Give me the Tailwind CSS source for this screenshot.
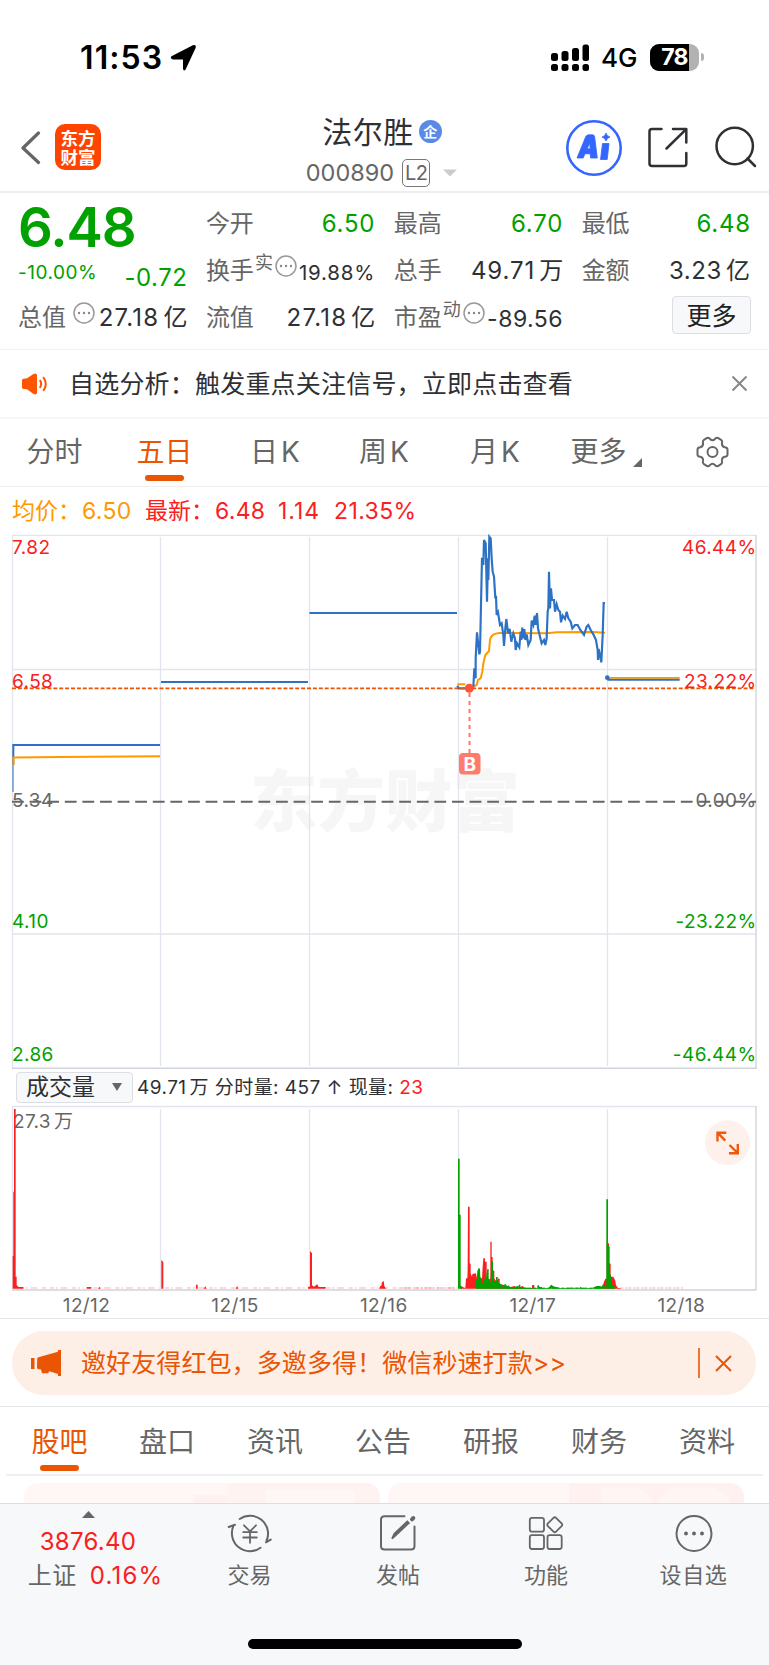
<!DOCTYPE html>
<html lang="zh-CN">
<head>
<meta charset="utf-8">
<title>法尔胜 000890</title>
<script src="https://cdn.jsdelivr.net/npm/@tailwindcss/browser@4"></script>
</head>
<body class="bg-white font-['Inter','Noto_Sans_CJK_SC',sans-serif] text-[#2f3033]">
<div class="flex h-[1665px] w-[769px] flex-col overflow-hidden bg-white">

  <!-- status bar -->
  <div class="flex h-[100px] shrink-0 items-start pt-[38px]">
    <div class="flex h-[40px] items-center pl-[80px]">
      <span class="w-[90px] text-[32px] font-semibold leading-none tracking-[1.1px] text-black">11:53</span>
      <svg width="28" height="28" viewBox="0 0 28 28"><path d="M1.500 12.200 22.800 1.300Q26.600 0 25.600 4L15.600 25.400Q13.800 27.600 13 25V15.500H3Q-.4 14.500 1.500 12.200Z" fill="#000"/></svg>
    </div>
    <div class="ml-auto flex h-[38px] items-center pr-[65px]">
      <svg class="mr-[11px]" width="40" height="28" viewBox="0 0 40 28" fill="#000"><rect x="1" y="10" width="7" height="8" rx="2.500"/><rect x="11.500" y="8" width="7" height="10" rx="2.500"/><rect x="22" y="5" width="7" height="13" rx="2.500"/><rect x="32.500" y="1.500" width="6.500" height="16.500" rx="2.500"/><rect x="1" y="21" width="7" height="7" rx="2.500"/><rect x="11.500" y="21" width="7" height="7" rx="2.500"/><rect x="22" y="21" width="7" height="7" rx="2.500"/><rect x="32.500" y="21" width="6.500" height="7" rx="2.500"/></svg>
      <span class="w-[49px] pt-[2px] text-[26px] font-medium leading-none text-black">4G</span>
      <div class="flex h-[27px] w-[49px] items-center overflow-hidden rounded-[9px] bg-[#b2b2b2]">
        <span class="flex h-full w-[39px] items-center justify-end bg-black pr-[1px] text-[23px] font-bold leading-none tracking-tight text-white">78</span>
      </div>
      <div class="ml-[2px] h-[8px] w-[3px] rounded-r-full bg-[#b2b2b2]"></div>
    </div>
  </div>

  <!-- title bar -->
  <div class="flex h-[93px] shrink-0 border-b-2 border-[#eeeeee]">
    <div class="flex w-[300px] items-start pl-[19px] pt-[24px]">
      <svg class="mt-[7px]" width="23" height="34" viewBox="0 0 23 34" fill="none" stroke="#666" stroke-width="3.200" stroke-linecap="round" stroke-linejoin="round"><path d="M19.500 2 4 17 19.500 31.500"/></svg>
      <div class="ml-[13px] flex h-[46px] w-[46px] flex-col items-center justify-center rounded-[10px] bg-[#ff4400] pt-[1px] text-[17.500px] font-bold leading-[19px] text-white"><span>东方</span><span>财富</span></div>
    </div>
    <div class="flex w-[165px] flex-col items-center pt-[13px]">
      <div class="flex h-[37px] items-center gap-[5px] pr-[1px]">
        <span class="text-[30px] leading-none tracking-[.5px]">法尔胜</span>
        <span class="flex size-[23px] items-center justify-center rounded-full bg-[#5b8ae6] text-[14px] font-bold leading-none text-white">企</span>
      </div>
      <div class="mt-[9px] flex h-[28px] items-center pr-[2px] text-[#666]">
        <span class="text-[23.500px] leading-none">000890</span>
        <span class="ml-[8px] flex h-[28px] w-[28px] items-center justify-center rounded-[5px] border border-[#777] text-[20px] leading-none tracking-tight">L2</span>
        <svg class="ml-[13px]" width="14" height="8" viewBox="0 0 14 8"><path d="M0 .5H14L7 7.500Z" fill="#ccc"/></svg>
      </div>
    </div>
    <div class="flex flex-1 pl-[101px] pt-[20px]">
      <svg width="56" height="56" viewBox="0 0 56 56"><circle cx="28" cy="28" r="26.700" fill="none" stroke="#3366ff" stroke-width="2.600"/><g fill="#3366ff" stroke="#3366ff" stroke-width=".8" stroke-linejoin="round"><path fill-rule="evenodd" d="M11 38 19.800 16.500Q20.800 14.800 22.500 14.800H26.500Q28.300 14.800 28.600 16.600L31.300 38H24.600L24.200 33.800H19L17.200 38ZM21.200 28.800H24.200L23.700 23Z"/><path d="M36.500 23.500H43L41.200 39.500H34.500ZM40 13Q40.800 16.300 44 17Q40.800 17.800 40 21Q39.200 17.800 36 17Q39.200 16.300 40 13Z"/></g></svg>
      <svg class="ml-[25px] mt-[7px]" width="41" height="42" viewBox="0 0 41 42" fill="none" stroke="#2f3033" stroke-width="2.500" stroke-linecap="round" stroke-linejoin="round"><path d="M14.500 2H5Q2.500 2 2.500 4.500V36.500Q2.500 39 5 39H37Q39.300 39 39.300 36.500V26M26 2H39.300V15.500M39 2.300 19.500 21.500"/></svg>
      <svg class="ml-[27px] mt-[6px]" width="42" height="42" viewBox="0 0 42 42" fill="none" stroke="#2f3033" stroke-width="2.500" stroke-linecap="round"><circle cx="19.700" cy="20" r="18.200"/><path d="M32.500 32.500 40 40"/></svg>
    </div>
  </div>

  <!-- quote summary -->
  <div class="grid h-[157px] shrink-0 grid-cols-4 gap-x-[18.500px] border-b border-[#f2f2f2] px-[18px] pt-[7px] text-[24px] leading-[47px] text-[#2f3033]">
    <div class="flex flex-col">
      <div class="h-[55px] text-[54.500px] font-semibold leading-[55px] tracking-[-1px] text-[#00a100]">6.48</div>
      <div class="flex h-[39px] items-start justify-between text-[#00a100]"><span class="text-[19px] leading-[36px] tracking-[.5px]">-10.00%</span><span class="leading-[45px] tracking-[.5px]">-0.72</span></div>
      <div class="flex items-center justify-between whitespace-nowrap"><span class="flex items-center text-[#666]">总值<svg class="mb-[9px] ml-[7px]" width="22" height="22" viewBox="0 0 22 22"><circle cx="11" cy="11" r="10" fill="none" stroke="#999" stroke-width="1.500"/><g fill="#888"><circle cx="6" cy="11" r="1.200"/><circle cx="11" cy="11" r="1.200"/><circle cx="16" cy="11" r="1.200"/></g></svg></span><span><span class="tracking-[1.200px]">27.18</span><span class="ml-[4px]">亿</span></span></div>
    </div>
    <div class="flex flex-col whitespace-nowrap">
      <div class="flex h-[47px] justify-between"><span class="text-[#666]">今开</span><span class="tracking-[.8px] text-[#00a100]">6.50</span></div>
      <div class="flex h-[47px] items-center justify-between"><span class="flex items-center text-[#666]">换手<span class="mb-[16px] ml-[1px] text-[18px] leading-none">实</span><svg class="mb-[10px] ml-[2px]" width="22" height="22" viewBox="0 0 22 22"><circle cx="11" cy="11" r="10" fill="none" stroke="#999" stroke-width="1.500"/><g fill="#888"><circle cx="6" cy="11" r="1.200"/><circle cx="11" cy="11" r="1.200"/><circle cx="16" cy="11" r="1.200"/></g></svg></span><span class="pt-[4px] text-[20.500px] tracking-[.8px]">19.88%</span></div>
      <div class="flex h-[47px] justify-between"><span class="text-[#666]">流值</span><span><span class="tracking-[1.200px]">27.18</span><span class="ml-[4px]">亿</span></span></div>
    </div>
    <div class="flex flex-col whitespace-nowrap">
      <div class="flex h-[47px] justify-between"><span class="text-[#666]">最高</span><span class="tracking-[.8px] text-[#00a100]">6.70</span></div>
      <div class="flex h-[47px] justify-between"><span class="text-[#666]">总手</span><span><span class="tracking-[.9px]">49.71</span><span class="ml-[4px]">万</span></span></div>
      <div class="flex h-[47px] items-center justify-between"><span class="flex items-center text-[#666]">市盈<span class="mb-[16px] ml-[1px] text-[18px] leading-none">动</span><svg class="mb-[9px] ml-[2px]" width="22" height="22" viewBox="0 0 22 22"><circle cx="11" cy="11" r="10" fill="none" stroke="#999" stroke-width="1.500"/><g fill="#888"><circle cx="6" cy="11" r="1.200"/><circle cx="11" cy="11" r="1.200"/><circle cx="16" cy="11" r="1.200"/></g></svg></span><span class="pt-[3px] text-[23px] tracking-[.5px]">-89.56</span></div>
    </div>
    <div class="flex flex-col whitespace-nowrap">
      <div class="flex h-[47px] justify-between"><span class="text-[#666]">最低</span><span class="tracking-[.8px] text-[#00a100]">6.48</span></div>
      <div class="flex h-[47px] justify-between pr-[1px]"><span class="text-[#666]">金额</span><span><span class="tracking-[.6px]">3.23</span><span class="ml-[4px]">亿</span></span></div>
      <div class="mt-[2px] flex h-[38px] w-[79px] items-center justify-center self-end rounded-[4px] border border-[#dcdee4] bg-[#f7f8fa] pt-[2px] text-[25px] leading-none text-[#222]">更多</div>
    </div>
  </div>

  <!-- notice -->
  <div class="flex h-[69px] shrink-0 items-center border-b-2 border-[#f5f5f6] pl-[21px] pr-[21px]">
    <svg width="28" height="24" viewBox="0 0 28 24"><path d="M1 8.500Q1 7 2.500 6.800L6 6.300 12.500 2Q15.500.6 16 3V21Q15.500 23.300 12.500 22L6 17.300 2.500 17Q1 16.700 1 15.200Z" fill="#ff5500"/><path d="M18.800 8.200Q21.600 12 18.800 15.800M22.200 5.200Q27.400 12 22.200 18.800" fill="none" stroke="#ff5500" stroke-width="2"/></svg>
    <span class="ml-[20px] pt-[1px] text-[25px] leading-none tracking-[.2px]">自选分析：触发重点关注信号，立即点击查看</span>
    <svg class="ml-auto" width="17" height="17" viewBox="0 0 17 17" stroke="#888" stroke-width="2"><path d="M1.500 1.500 15.500 15.500M15.500 1.500 1.500 15.500"/></svg>
  </div>

  <!-- period tabs -->
  <div class="flex h-[68px] shrink-0 items-stretch border-b border-[#f0f0f1] text-[28px] leading-none text-[#666]">
    <div class="flex w-[109px] flex-col items-center pt-[19px]">分时</div>
    <div class="flex w-[111px] flex-col items-center pt-[19px] text-[#ea5504]">五日<span class="mt-[9px] h-[6px] w-[39px] rounded-full bg-[#ea5504]"></span></div>
    <div class="flex w-[110px] justify-center gap-[3px] pt-[19px]"><span>日</span><span>K</span></div>
    <div class="flex w-[110px] justify-center gap-[3px] pr-[2px] pt-[19px]"><span>周</span><span>K</span></div>
    <div class="flex w-[110px] justify-center gap-[3px] pt-[19px]"><span>月</span><span>K</span></div>
    <div class="flex w-[110px] justify-center gap-[6px] pl-[2px] pt-[19px]"><span>更多</span><svg class="mt-[20px]" width="9" height="9" viewBox="0 0 9 9"><path d="M9 0V9H0Z" fill="#666"/></svg></div>
    <div class="flex flex-1 justify-center pr-[4px] pt-[17px]"><svg width="33" height="32" viewBox="0 0 33 32" fill="none" stroke="#666" stroke-width="2"><circle cx="16.500" cy="16" r="5"/><path d="M11 2Q13 1.200 14 3Q16.500 5.500 19 3Q20 1.200 22 2L25 3.800Q26.600 5 26 7Q25.500 10.500 28.800 11.200Q31.500 11.500 31.500 13.500V18.500Q31.500 20.500 28.800 20.800Q25.500 21.500 26 25Q26.600 27 25 28.200L22 30Q20 30.800 19 29Q16.500 26.500 14 29Q13 30.800 11 30L8 28.200Q6.400 27 7 25Q7.500 21.500 4.200 20.800Q1.500 20.500 1.500 18.500V13.500Q1.500 11.500 4.200 11.200Q7.500 10.500 7 7Q6.400 5 8 3.800Z"/></svg></div>
  </div>

  <!-- legend -->
  <div class="flex h-[44px] shrink-0 items-center pl-[12px] pt-[5px] text-[23px] leading-none text-[#fa2020]">
    <span class="w-[133px] text-[#ff9900]">均价：<span class="ml-[1px] tracking-[.3px]">6.50</span></span>
    <span class="w-[133px]">最新：<span class="ml-[1px] tracking-[.3px]">6.48</span></span>
    <span class="w-[56px] tracking-[1px]">1.14</span>
    <span class="tracking-[.4px]">21.35%</span>
  </div>

  <!-- price chart -->
  <svg class="block shrink-0" width="769" height="539" viewBox="0 531 769 539" font-size="19">
    <text x="250" y="826" font-size="67.500" font-weight="900" fill="#f6f6f6">东方财富</text>
    <g stroke="#e2e5ed" stroke-width="1.300">
      <path d="M12 535.300H756M12 669.500H756M12 934H756M12.500 535V1068M160.500 537V1066M309.500 537V1066M458.500 537V1066M607.500 537V1066"/>
      <path d="M756 535V1068.500" stroke="#ced1da"/><path d="M12 1068.200H757" stroke="#ced3de" stroke-width="1.500"/>
    </g>
    <path d="M12 801.700H756" stroke="#666" stroke-width="2" stroke-dasharray="11.800 5.800"/>
    <g fill="none" stroke="#2d72c4" stroke-width="2">
      <path d="M13.300 765V745H160"/><path d="M13 792V765" stroke-width="1.500" opacity=".7"/><path d="M161 682H308M309.500 613H457"/>
    </g>
    <path d="M13.500 765V757.500L60 757L160 756.300" fill="none" stroke="#ff9900" stroke-width="2"/>
    <g transform="translate(440 525) scale(.33333)" fill="none" stroke-width="6.500" stroke-linejoin="miter">
      <path stroke="#ff9900" stroke-width="6" d="M52 478H76M100 484L110 480L114 465L122 460L127 440L130 415L136 390L147 378L150 345Q153 326 178 324L320 325L350 322L460 321L495 323"/>
      <path stroke="#2d72c4" d="M52 482L56 490H88L100 485L103 430L107 460L107 400L111 322L118 388L120 380L126 98L130 120L132 45L137 55L141 230L144 100L145 165L148 35L152 40L155 100L158 140L162 155L166 220L168 212L170 270L174 262L180 300L185 295L190 330L192 363L196 310L199 282L204 325L209 312L214 350L220 325L225 340L227 375L231 355L238 367L242 320L244 345L247 308L250 340L253 312L256 345L260 328L265 360L272 345L275 287L280 300L284 272L287 300L291 264L294 310L300 335L305 355L312 345L316 360L320 340L323 260L325 250L327 140L330 250L333 190L336 225L342 225L345 260L350 238L355 255L360 260L363 292L368 272L375 282L380 260L385 280L392 290L397 310L405 300L413 300L421 315L432 330L440 305L445 300L452 315L460 328L468 345L473 375L474 405L476 372L484 412L488 330L491 234H495"/>
      <path stroke="#2d72c4" d="M502 464H719"/><path stroke="#ff9900" stroke-width="5" d="M508 458.500H719"/>
      <circle cx="502" cy="458" r="7" fill="#2d72c4"/>
    </g>
    <path d="M12 688.300H755" stroke="#ea5504" stroke-width="1.800" stroke-dasharray="4 1.900"/>
    <circle cx="469.300" cy="688.300" r="4.500" fill="#ff5236"/>
    <path d="M469.500 693V753" stroke="#ff7464" stroke-width="2" stroke-dasharray="4 4"/>
    <rect x="459" y="753" width="21.500" height="21.500" rx="4" fill="#ff7b6b"/>
    <text x="469.800" y="770.500" text-anchor="middle" font-size="19" font-weight="700" fill="#fff">B</text>
    <g letter-spacing=".4">
      <g fill="#fa2020"><text x="12" y="554">7.82</text><text x="12" y="687.500">6.58</text><text x="756.500" y="554" text-anchor="end">46.44%</text><text x="756.500" y="687.500" text-anchor="end">23.22%</text></g>
      <g fill="#666"><text x="12" y="807">5.34</text><text x="756.500" y="807" text-anchor="end">0.00%</text></g>
      <g fill="#00a100"><text x="12" y="928">4.10</text><text x="12" y="1061">2.86</text><text x="756.500" y="928" text-anchor="end">-23.22%</text><text x="756.500" y="1061" text-anchor="end">-46.44%</text></g>
    </g>
  </svg>

  <!-- volume header -->
  <div class="flex h-[34px] shrink-0 items-center pl-[16px]">
    <div class="flex h-[31px] w-[117px] items-center justify-between rounded-[4px] border border-[#dcdee4] bg-[#f7f8fa] pl-[9px] pr-[10px] text-[23px] leading-none"><span class="pt-[1px]">成交量</span><svg width="10" height="8" viewBox="0 0 10 8"><path d="M0 0H10L5 8Z" fill="#666"/></svg></div>
    <span class="ml-[4px] pt-[1px] text-[19px] leading-none tracking-[.45px]">49.71<span class="ml-[3px]">万</span> 分时量: 457 ↑ 现量: <span class="text-[#fa2020]">23</span></span>
  </div>

  <!-- volume chart -->
  <svg class="block shrink-0" width="769" height="214" viewBox="0 1104 769 214" font-size="19">
    <g stroke="#e2e5ed" stroke-width="1.300">
      <path d="M12 1106.500H756M12.500 1107V1290M160.500 1109V1289M309.500 1109V1289M458.500 1109V1289M607.500 1109V1289"/>
      <path d="M756 1106V1290.500" stroke="#ced1da"/><path d="M12 1290H756" stroke="#ced3de" stroke-width="1.300"/>
    </g>
    <text x="13" y="1128" fill="#666" letter-spacing=".3">27.3<tspan dx="3">万</tspan></text>
    <g transform="translate(0 1060) scale(.33333)" fill="#fa2020">
      <path d="M38 686V588H40V395H42V147H47V650H50V676L56 681H70V686ZM484 686V600L490 606V686ZM930 686V573L936 580V676L942 680L952 673L956 681H977V686ZM1137 686L1141 678L1145 676V668L1151 662L1153 678L1158 686ZM588 686V674H593V686ZM611 686L616 679L620 686ZM707 686L711 678L715 686ZM260 686V681H274V686ZM294 686L298 680L302 686ZM924 686V680H930V686Z"/>
      <path d="M60 684H140M150 684H250M280 684H480M495 684H930M980 684H1380" stroke="#fa2020" stroke-width="3" stroke-dasharray="12 6 5 9 20 14" opacity=".35" fill="none"/>
    </g>
    <g transform="translate(400 1060) scale(.33333)">
      <path fill="#fa2020" d="M181 686V676L188 681L196 684L198 655L202 655L203 627L204 440H209V610L212 612V640L216 650L217 642L228 640L230 655L233 630H238V655H246L248 620L250 595H255V605H260V650L266 660L271 655V545H275V590L278 592V632L283 632V655L290 668L294 655L299 657V672L312 675L320 683L344 678L352 684L368 678L374 684H396V675H403V686ZM606 686L612 665L616 656H620V550H627V608L632 612V650H640L646 662L648 676L654 684H662V686Z"/>
      <path fill="#00a100" d="M174 686V296H179V464H182V678L186 686ZM228 686V660L233 655V632L236 624L240 626L241 650L246 660V668H251L254 655L259 655V645L262 627L266 627V655L272 670L274 600L279 606V630L282 635V665L288 660V651H293V660L298 670L303 672L305 678L312 680L313 673H318L321 679L327 676L330 682H345L352 677L356 680V674H361V682L380 684H412V677L416 675L419 681H426V684H446L450 678L454 674L460 679L480 684L540 683L541 680L545 684H576L590 678H600L604 680L610 672L614 678L619 686ZM619 686V418H624V555L629 560V640L632 645L635 655V672L642 678L646 686Z"/>
      <path d="M0 684H170M660 684H850" stroke="#fa2020" stroke-width="3" stroke-dasharray="10 5 6 3" opacity=".35"/>
      <path d="M330 684.500H610" stroke="#00a100" stroke-width="3" stroke-dasharray="22 6 9 5"/>
    </g>
    <circle cx="727.500" cy="1142.700" r="22.500" fill="#fef1ec"/>
    <path d="M717.500 1141.500V1132.700H726.300M717.500 1132.700L725.300 1140.700M729.500 1145L737.600 1153M737.800 1144V1153.200H729" fill="none" stroke="#f0580c" stroke-width="2.400"/>
    <g fill="#666" text-anchor="middle" letter-spacing=".4"><text x="86.500" y="1312">12/12</text><text x="235" y="1312">12/15</text><text x="383.800" y="1312">12/16</text><text x="532.800" y="1312">12/17</text><text x="681.300" y="1312">12/18</text></g>
  </svg>

  <!-- promotion -->
  <div class="h-[89px] shrink-0 border-y border-[#e2e5ea] px-[12px] pt-[12px]">
    <div class="flex h-[64px] w-[744px] items-center rounded-full bg-[#fdeee6] pl-[18px] pr-[24px] text-[#ea5504]">
      <svg width="32" height="28" viewBox="0 0 32 28" fill="#ea5504"><path d="M1 9H4.500V20H1ZM7.200 10Q7 8.600 8.500 8.300L28 2.800V1H31V27H28V25L19.500 22.200L18 24.200H12L11 20.500L8 20Q7 19.700 7 18.500Z"/></svg>
      <span class="ml-[19px] pt-[1px] text-[25px] leading-none tracking-[.1px]">邀好友得红包，多邀多得！微信秒速打款&gt;&gt;</span>
      <span class="ml-auto h-[30px] w-[2px] bg-[#ea5504]/80"></span>
      <svg class="ml-[15px]" width="17" height="17" viewBox="0 0 17 17" stroke="#ea5504" stroke-width="2"><path d="M1 1 16 16M16 1 1 16"/></svg>
    </div>
  </div>

  <!-- section tabs -->
  <div class="mx-[6px] flex h-[69px] shrink-0 border-b-2 border-[#f0f0f2] text-[28px] leading-none text-[#666]">
    <div class="flex w-[107px] flex-col items-center pt-[21px] text-[#ea5504]">股吧<span class="mt-[9px] h-[6px] w-[39px] rounded-full bg-[#ea5504]"></span></div>
    <div class="w-[108px] pt-[21px] text-center">盘口</div>
    <div class="w-[108px] pt-[21px] text-center">资讯</div>
    <div class="w-[108px] pt-[21px] text-center">公告</div>
    <div class="w-[108px] pt-[21px] text-center">研报</div>
    <div class="w-[108px] pt-[21px] text-center">财务</div>
    <div class="w-[108px] pt-[21px] text-center">资料</div>
  </div>

  <!-- feed cards -->
  <div class="flex h-[27px] shrink-0 gap-[8px] overflow-hidden px-[24px] pt-[7px]">
    <div class="flex h-[40px] w-[356px] overflow-hidden rounded-[14px] bg-[#fff7f5]"><div class="ml-[170px] mt-[12px] h-[30px] w-[34px] bg-[#fef1ef]"></div><div class="h-full flex-1 bg-[#fef3f1] pl-[37px] pt-[7px]"><div class="h-full w-[90px] rounded-t bg-[#fff7f5]"></div></div></div>
    <div class="flex h-[40px] w-[356px] overflow-hidden rounded-[14px] bg-[#fff7f5]"><div class="ml-[181px] h-full flex-1 bg-[#fef1ef] pl-[32px] pt-[4px]"><div class="flex h-full w-[132px]"><div class="h-full w-[54px] rounded-tr-[24px] bg-[#fff5f3]"></div><div class="h-full flex-1 rounded-t-[26px] bg-[#fff5f3]"></div></div></div></div>
  </div>

  <!-- bottom bar -->
  <div class="flex flex-1 flex-col border-t border-[#dcdee2] bg-[#f7f8fa] text-[22px] leading-none text-[#666]">
    <div class="flex h-[135px]">
      <div class="flex w-[176px] flex-col items-center pt-[7px] text-[24px]">
        <svg width="13" height="7" viewBox="0 0 13 7"><path d="M0 7 6.500 0 13 7Z" fill="#666"/></svg>
        <span class="mt-[12px] tracking-[.3px] text-[#fa2020]">3876.40</span>
        <div class="mt-[10px] flex items-center gap-[13px] pl-[15px]"><span class="tracking-[.5px]">上证</span><span class="tracking-[1.200px] text-[#fa2020]">0.16%</span></div>
      </div>
      <div class="flex w-[148px] flex-col items-center pr-[1px] pt-[9px]">
        <svg width="46" height="40" viewBox="0 0 46 40" fill="none" stroke="#666" stroke-width="2" stroke-linecap="round" stroke-linejoin="round"><path d="M12.700 6A18 18 0 0 1 39.500 28M39 29.300 43.700 26.600M33.500 34.700A18 18 0 0 1 6.300 13.200M1.700 14 8 11.700"/><path d="M17 12.300 23 18.300 29 12.300M23 18.300V29.800M16.200 19.200H29.800M16.200 24.500H29.800" stroke-width="1.800"/></svg>
        <span class="mt-[11px]">交易</span>
      </div>
      <div class="flex w-[148px] flex-col items-center pt-[9px]">
        <svg width="40" height="40" viewBox="0 0 40 40" fill="none" stroke="#666" stroke-width="2" stroke-linecap="round"><path d="M26.500 3.200H6.500Q3 3.200 3 6.700V33Q3 36.500 6.500 36.500H33Q36.500 36.500 36.500 33V13.500"/><path d="M30.800 10 18.500 21.500 14 25.600 16.500 20.500 29.300 8.500Z" fill="#666" stroke-width="1.800"/><path d="M34 6.300 35.300 5" stroke-width="4"/></svg>
        <span class="mt-[11px]">发帖</span>
      </div>
      <div class="flex w-[148px] flex-col items-center pt-[9px]">
        <svg width="40" height="40" viewBox="0 0 40 40" fill="none" stroke="#666" stroke-width="1.800"><rect x="3.800" y="4.800" width="14.200" height="13.800" rx="2.200"/><rect x="3.800" y="22.200" width="14.200" height="13.800" rx="2.200"/><rect x="21.500" y="22.200" width="14.200" height="13.800" rx="2.200"/><rect x="23" y="6" width="11.500" height="11.500" rx="1.800" transform="rotate(45 28.750 11.750)"/></svg>
        <span class="mt-[11px]">功能</span>
      </div>
      <div class="flex w-[148px] flex-col items-center pr-[1px] pt-[9px]">
        <svg width="40" height="40" viewBox="0 0 40 40"><circle cx="20" cy="20.500" r="17.500" fill="none" stroke="#666" stroke-width="2"/><g fill="#666"><circle cx="12" cy="20.500" r="1.900"/><circle cx="20" cy="20.500" r="1.900"/><circle cx="28" cy="20.500" r="1.900"/></g></svg>
        <span class="mt-[11px] tracking-[.6px]">设自选</span>
      </div>
    </div>
    <div class="mx-auto h-[10px] w-[274px] rounded-full bg-black"></div>
  </div>
</div>
</body>
</html>
